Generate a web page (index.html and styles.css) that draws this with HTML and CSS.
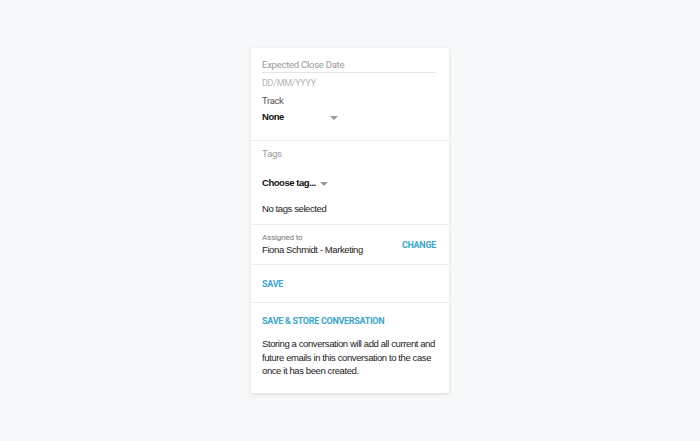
FILE: index.html
```html
<!DOCTYPE html>
<html>
<head>
<meta charset="utf-8">
<link rel="stylesheet" href="styles.css">
</head>
<body>
<div class="card">
  <section class="sec sec-top">
    <div class="field-label">Expected Close Date</div>
    <div class="placeholder">DD/MM/YYYY</div>
    <div class="small-label">Track</div>
    <div class="select">
      <span class="select-value">None</span>
      <span class="caret"></span>
    </div>
  </section>
  <section class="sec sec-tags">
    <div class="tags-label">Tags</div>
    <div class="select select-tags">
      <span class="select-value">Choose tag...</span>
      <span class="caret"></span>
    </div>
    <div class="body-text">No tags selected</div>
  </section>
  <section class="sec sec-assign">
    <div class="assign-info">
      <div class="tiny-label">Assigned to</div>
      <div class="body-text">Fiona Schmidt - Marketing</div>
    </div>
    <div class="link">CHANGE</div>
  </section>
  <section class="sec sec-save">
    <div class="link">SAVE</div>
  </section>
  <section class="sec sec-store">
    <div class="link">SAVE &amp; STORE CONVERSATION</div>
    <p class="para">Storing a conversation will add all current and future emails in this conversation to the case once it has been created.</p>
  </section>
</div>
</body>
</html>
```
FILE: styles.css
```css
html, body {
  margin: 0;
  padding: 0;
  background: #f7f8fa;
}
body {
  width: 700px;
  height: 441px;
  font-family: "Liberation Sans", Arial, sans-serif;
  color: #222;
}
.card {
  margin: 48px 0 0 251px;
  width: 198px;
  background: #fff;
  box-shadow: 0 1px 4px rgba(0,0,0,0.12);
}
.sec {
  padding: 0 13px 0 11px;
  border-bottom: 1px solid #ececec;
}
.sec:last-child { border-bottom: none; }
.sec-top { padding-top: 11px; height: 81px; }
.field-label {
  font-family: Roboto, sans-serif;
  font-size: 9.6px;
  letter-spacing: -0.3px;
  color: #9b9b9b;
  line-height: 11px;
  padding-bottom: 2px;
  border-bottom: 1px solid #e4e4e4;
}
.placeholder {
  font-family: Roboto, sans-serif;
  font-size: 9px;
  letter-spacing: -0.3px;
  color: #b5b5b5;
  margin-top: 4px;
  line-height: 12px;
}
.small-label {
  font-family: Roboto, sans-serif;
  font-size: 9.5px;
  letter-spacing: -0.35px;
  color: #555;
  margin-top: 6px;
  line-height: 12px;
}
.select {
  display: flex;
  align-items: center;
  margin-top: 3px;
  line-height: 14px;
}
.select-value {
  font-size: 9.5px;
  font-weight: bold;
  letter-spacing: -0.45px;
  color: #111;
  width: 68px;
}
.select-tags .select-value { width: auto; margin-right: 4px; }
.caret {
  width: 0; height: 0;
  border-left: 4px solid transparent;
  border-right: 4px solid transparent;
  border-top: 4px solid #9a9a9a;
  margin-top: 2px;
}
.sec-tags { padding-top: 6px; height: 77px; }
.tags-label {
  font-family: Roboto, sans-serif;
  font-size: 9.8px;
  letter-spacing: -0.35px;
  color: #9b9b9b;
  line-height: 13px;
}
.sec-tags .select { margin-top: 16px; }
.body-text {
  font-size: 9.5px;
  letter-spacing: -0.4px;
  color: #222;
  line-height: 14px;
}
.sec-tags .body-text { margin-top: 12px; }
.sec-assign {
  display: flex;
  align-items: center;
  justify-content: space-between;
  height: 39px;
}
.tiny-label {
  font-family: Roboto, sans-serif;
  font-size: 8px;
  letter-spacing: -0.15px;
  color: #777;
  line-height: 10px;
}
.link {
  font-family: Roboto, sans-serif;
  font-weight: bold;
  font-size: 9px;
  letter-spacing: -0.3px;
  color: #3aa6c9;
}
.sec-save {
  height: 37px;
  display: flex;
  align-items: center;
}
.sec-store { padding-top: 13px; padding-bottom: 15px; }
.para {
  margin: 11px 0 0 0;
  font-size: 9.5px;
  letter-spacing: -0.4px;
  line-height: 13.5px;
  color: #222;
}
```
